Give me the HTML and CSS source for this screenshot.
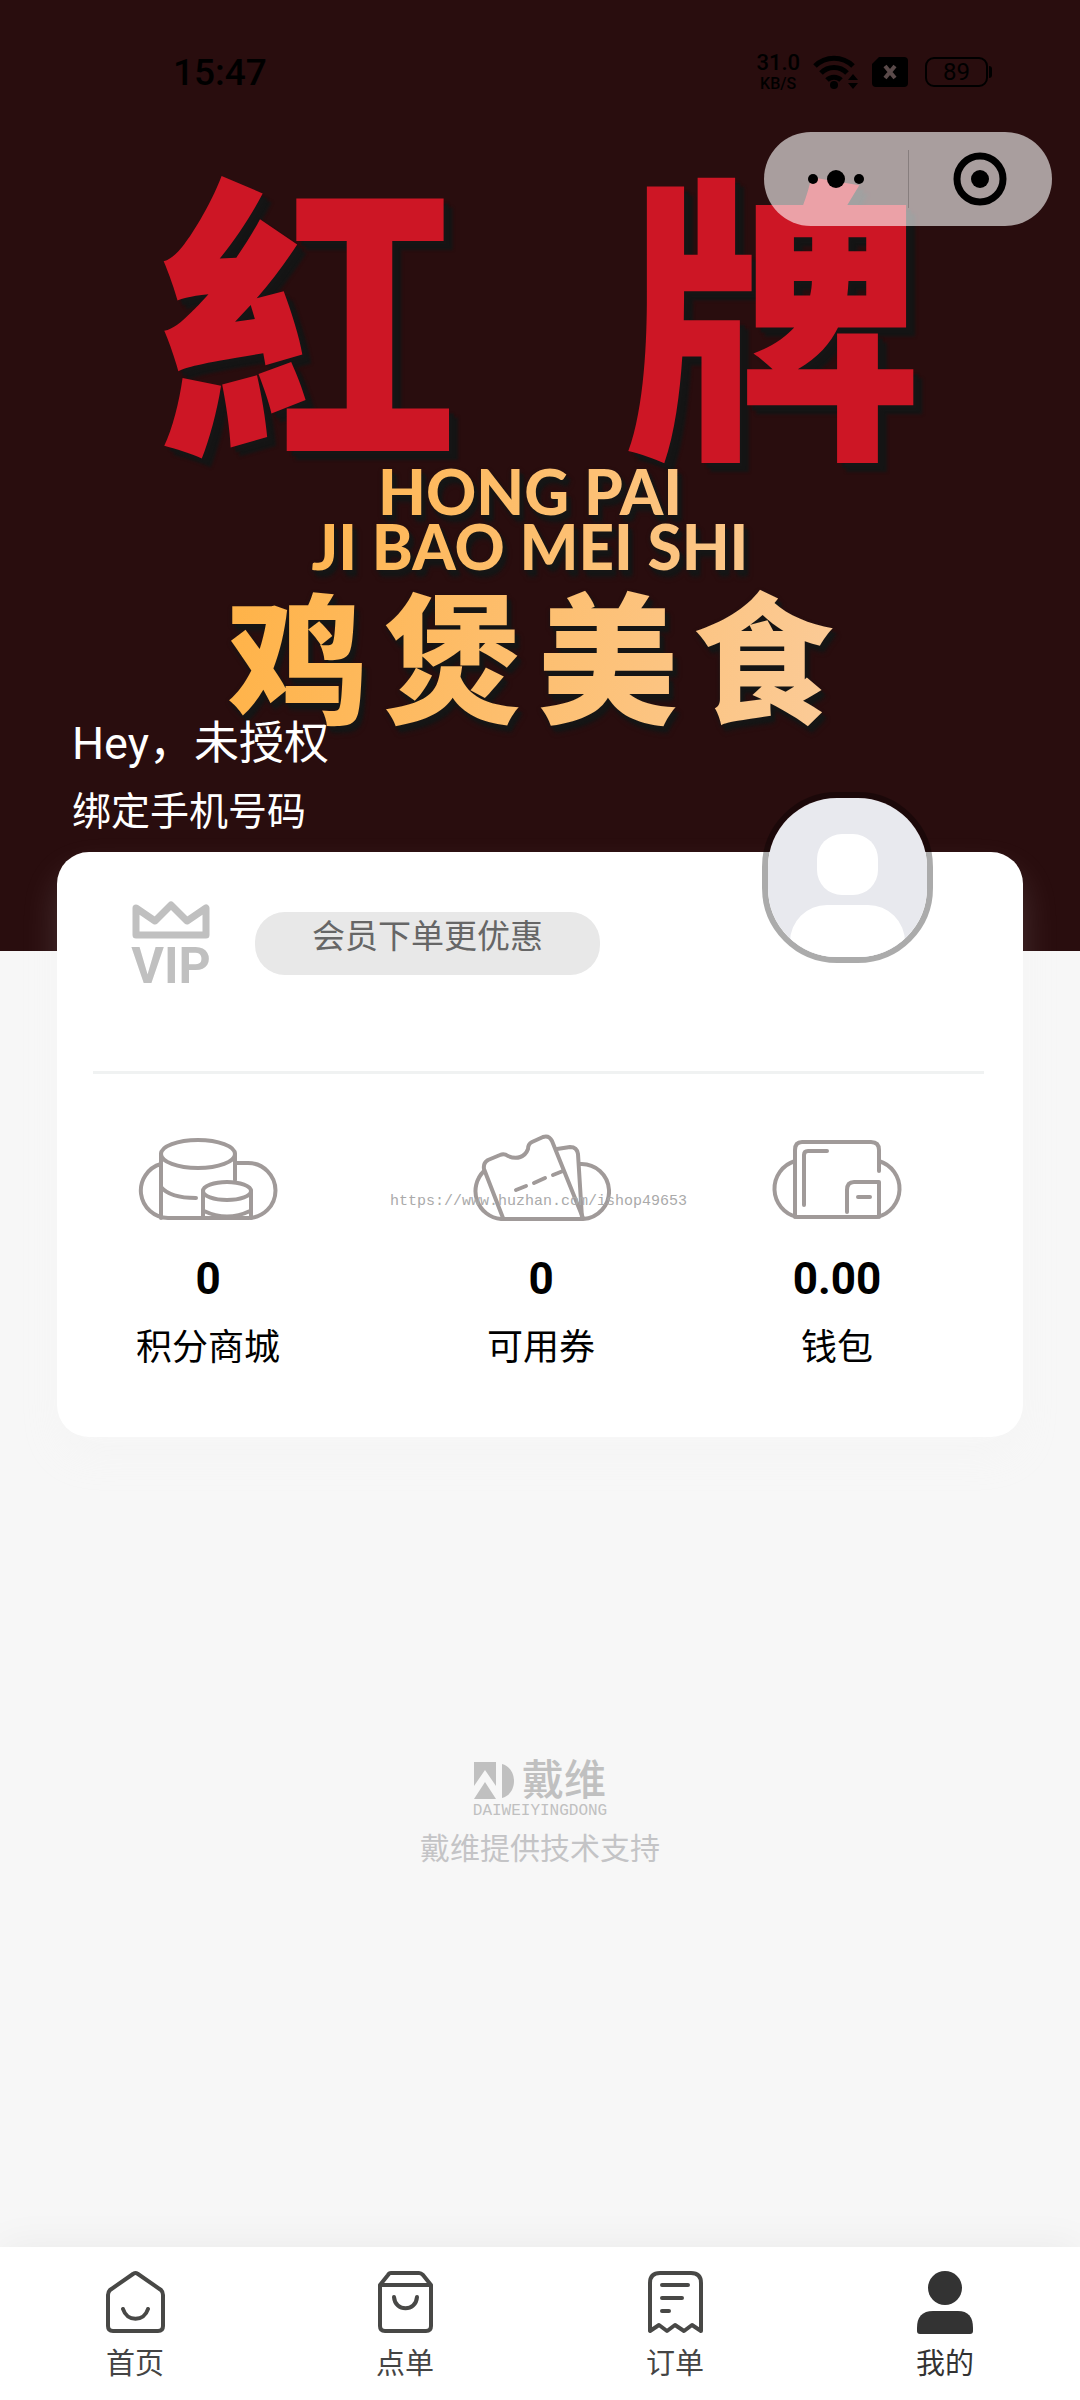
FILE: index.html
```html
<!DOCTYPE html>
<html lang="zh-CN">
<head>
<meta charset="utf-8">
<meta name="viewport" content="width=device-width, initial-scale=1">
<title>我的</title>
<link rel="stylesheet" href="styles.css">
</head>
<body>
<div class="page">
  <header class="hero">
    <div class="status">
      <time class="status-time">15:47</time>
      <div class="status-icons">
        <div class="net"><span>31.0</span><span class="net-unit">KB/S</span></div>
        <svg class="wifi" viewBox="0 0 46 34" aria-hidden="true">
          <g fill="none" stroke="#000" stroke-width="5">
            <path d="M2 11 A27 27 0 0 1 40 11"/>
            <path d="M8 18 A18 18 0 0 1 34 18"/>
            <path d="M14 25 A10 10 0 0 1 28 25"/>
          </g>
          <circle cx="21" cy="30" r="4"/>
          <path d="M40 19l5 6H35zM40 34l5-6H35z"/>
        </svg>
        <svg class="sim" viewBox="0 0 36 30" aria-hidden="true">
          <path d="M7 0H32a4 4 0 0 1 4 4V26a4 4 0 0 1-4 4H4a4 4 0 0 1-4-4V7z"/>
          <path d="M13 9l10 12M23 9L13 21" stroke="#5a4a4a" stroke-width="4"/>
        </svg>
        <div class="battery">89</div>
      </div>
    </div>
    <div class="capsule">
      <button class="capsule-btn" aria-label="更多">
        <svg class="dots" viewBox="0 0 58 20"><circle cx="6" cy="10" r="5"/><circle cx="29" cy="10" r="9"/><circle cx="52" cy="10" r="5"/></svg>
      </button>
      <button class="capsule-btn" aria-label="关闭">
        <svg class="ring" viewBox="0 0 54 54"><circle cx="27" cy="27" r="23" fill="none" stroke="#000" stroke-width="7"/><circle cx="27" cy="27" r="9"/></svg>
      </button>
    </div>
    <div class="logo">
      <div class="logo-red"><span>紅</span><span>牌</span></div>
      <div class="logo-gold">
        <div class="logo-latin">HONG PAI</div>
        <div class="logo-latin">JI BAO MEI SHI</div>
        <div class="logo-food"><span>鸡</span><span>煲</span><span>美</span><span>食</span></div>
      </div>
    </div>
    <div class="greeting">
      <h1 class="hello">Hey，未授权</h1>
      <a class="bind" href="#">绑定手机号码</a>
    </div>
  </header>

  <main class="main">
    <section class="card">
      <button class="avatar" aria-label="头像">
        <svg viewBox="0 0 159 159"><rect width="159" height="159" fill="#e8e9ee"/><rect x="49" y="36" width="61" height="61" rx="25" fill="#fff"/><rect x="22" y="107" width="115" height="90" rx="37" fill="#fff"/></svg>
      </button>
      <div class="vip">
        <svg class="vip-icon" viewBox="0 0 80 86" role="img" aria-label="VIP">
          <path d="M5 8L24 21L40 5L56 21L75 8V35H5Z" fill="none" stroke="#c0c0c0" stroke-width="7" stroke-linejoin="round"/>
          <text class="vip-text" x="40" y="83" text-anchor="middle">VIP</text>
        </svg>
        <button class="vip-pill">会员下单更优惠</button>
      </div>
      <hr class="rule">
      <nav class="stats">
        <a class="stat" href="#">
          <svg class="stat-icon" viewBox="0 0 140 96" aria-hidden="true">
            <path d="M23 34A27.5 27.5 0 0 0 30 88H110A27.5 27.5 0 0 0 110 33H97"/>
            <ellipse cx="60" cy="24" rx="37" ry="14"/>
            <path d="M23 24V88M97 24V50M23 57Q32 68 58 68"/>
            <ellipse cx="89" cy="61" rx="24" ry="9"/>
            <path d="M65 61V88M113 61V88M66 81Q89 92 112 81"/>
          </svg>
          <b class="stat-num">0</b><span class="stat-label">积分商城</span>
        </a>
        <a class="stat" href="#">
          <svg class="stat-icon" viewBox="0 0 140 96" aria-hidden="true">
            <path d="M13 41A28 28 0 0 0 30 89H112A27 27 0 0 0 109 34"/>
            <path d="M32 88L13 39Q12 33 17 30L29 25Q33 23 37 26C46 30 54 27 57 19Q57 14 61 12L72 7Q78 5 81 11L112 88"/>
            <path d="M86 19L99 17Q106 17 107 24L111 88"/>
            <path d="M45 60L55 56M63 53L74 48M82 45L92 41"/>
          </svg>
          <b class="stat-num">0</b><span class="stat-label">可用券</span>
        </a>
        <a class="stat" href="#">
          <svg class="stat-icon" viewBox="0 0 140 96" aria-hidden="true">
            <path d="M28 31A29 29 0 0 0 30 87H110A29 29 0 0 0 112 31"/>
            <path d="M28 87V20Q28 12 35 12H104Q112 12 112 20V41M60 21H41Q37 21 37 25V75"/>
            <path d="M80 82V60Q80 52 87 52H112V87M91 67H103"/>
          </svg>
          <b class="stat-num">0.00</b><span class="stat-label">钱包</span>
        </a>
      </nav>
      <div class="watermark">https://www.huzhan.com/ishop49653</div>
    </section>

    <footer class="brand">
      <div class="brand-logo">
        <svg class="brand-mark" viewBox="0 0 40 38" aria-hidden="true"><path d="M0 0H22V24L11 8L0 24ZM0 37L11 20L22 37ZM28 2C44 6 44 32 28 36Z" fill="#c0c0c0"/></svg>
        <span class="brand-name">戴维</span>
      </div>
      <div class="brand-latin">DAIWEIYINGDONG</div>
      <div class="brand-note">戴维提供技术支持</div>
    </footer>
  </main>

  <nav class="tabs">
    <a class="tab" href="#">
      <svg viewBox="0 0 64 64" aria-hidden="true"><path d="M30 4Q32 2 35 4L58 20Q60 22 60 25V56Q60 61 55 61H10Q5 61 5 56V25Q5 22 7 20ZM20 39C24 52 41 52 45 39"/></svg>
      <span>首页</span>
    </a>
    <a class="tab" href="#">
      <svg viewBox="0 0 64 64" aria-hidden="true"><path d="M7 15L15 5Q16 3 18 3H46Q48 3 50 5L58 15V56Q58 61 53 61H12Q7 61 7 56ZM7 15H58M21 27C22 42 43 42 44 27"/></svg>
      <span>点单</span>
    </a>
    <a class="tab" href="#">
      <svg viewBox="0 0 64 64" aria-hidden="true"><path d="M7 61V13Q7 3 17 3H48Q58 3 58 13V61L49 55L41 61L32 55L24 61L16 55ZM19 15H45M19 28H39M19 41H26"/></svg>
      <span>订单</span>
    </a>
    <a class="tab tab-active" href="#" aria-current="page">
      <svg viewBox="0 0 64 64" aria-hidden="true"><circle cx="32" cy="18" r="17"/><path d="M4 61V58Q4 41 20 41H45Q60 41 60 58V61Q60 64 57 64H7Q4 64 4 61Z"/></svg>
      <span>我的</span>
    </a>
  </nav>
</div>
</body>
</html>
```

FILE: styles.css
```css
* { box-sizing: border-box; }

body {
  margin: 0;
  background: #f7f7f7;
  color: #000;
  font-family: Roboto, "Noto Sans CJK SC", sans-serif;
}

a { color: inherit; text-decoration: none; }

button {
  margin: 0;
  padding: 0;
  border: 0;
  background: none;
  font: inherit;
  color: inherit;
}

svg { display: block; }

.page {
  display: flex;
  flex-direction: column;
  min-height: 100vh;
}

/* Header */
.hero {
  position: relative;
  padding-bottom: 113px;
  background: #290d0e;
}

.status {
  display: flex;
  align-items: center;
  justify-content: space-between;
  height: 144px;
  padding: 0 88px 0 173px;
}

.status-time { font-size: 37px; font-weight: 500; }

.status-icons { display: flex; align-items: center; gap: 13px; }

.net {
  display: flex;
  flex-direction: column;
  align-items: center;
  font-size: 22px;
  font-weight: 500;
  line-height: 24px;
}

.net-unit { font-size: 16px; line-height: 18px; }

.wifi { width: 46px; height: 34px; }
.sim { width: 36px; height: 30px; }

.battery {
  position: relative;
  width: 63px;
  height: 30px;
  margin: 0 4px;
  border: 2px solid #000;
  border-radius: 9px;
  font-size: 24px;
  line-height: 26px;
  text-align: center;
}

.battery::after {
  content: "";
  position: absolute;
  top: 7px;
  right: -6px;
  width: 3px;
  height: 12px;
  border-radius: 0 3px 3px 0;
  background: #000;
}

.capsule {
  position: absolute;
  z-index: 1;
  top: 132px;
  right: 28px;
  display: flex;
  width: 288px;
  height: 94px;
  border-radius: 47px;
  background: rgba(255, 255, 255, .6);
}

.capsule-btn {
  flex: 1;
  display: flex;
  align-items: center;
  justify-content: center;
}

.capsule-btn + .capsule-btn::before {
  content: "";
  position: absolute;
  top: 18px;
  left: 50%;
  width: 1px;
  height: 58px;
  background: rgba(0, 0, 0, .2);
}

.dots { width: 58px; height: 20px; }
.ring { width: 54px; height: 54px; }

.logo {
  display: flex;
  flex-direction: column;
  align-items: center;
  padding-top: 9px;
}

.logo-red {
  display: flex;
  gap: 167px;
  color: #cd1625;
  font-family: "Noto Sans CJK TC", sans-serif;
  font-size: 300px;
  font-weight: 900;
  line-height: 300px;
  text-shadow: 5px 5px 2px #151515, 9px 9px 3px #151515;
}

.logo-gold {
  display: flex;
  flex-direction: column;
  align-items: center;
  margin: 11px 20px 0 0;
  background: linear-gradient(100deg, #ffb245, #fbcb98);
  background-clip: text;
  -webkit-background-clip: text;
  color: transparent;
  filter: drop-shadow(4px 5px 1px #151515) drop-shadow(0 2px 2px #151515);
}

.logo-latin {
  font-family: Lato, sans-serif;
  font-size: 62px;
  font-weight: 900;
  line-height: 55px;
}

.logo-food {
  display: flex;
  gap: 15px;
  margin-top: 20px;
  font-size: 140px;
  font-weight: 900;
  line-height: 140px;
}

.greeting {
  position: relative;
  display: flex;
  flex-direction: column;
  align-items: flex-start;
  gap: 12px;
  margin-top: -20px;
  padding: 0 72px;
  color: #fff;
}

.hello { margin: 0; font-size: 45px; font-weight: 400; line-height: 60px; }
.bind { font-size: 39px; line-height: 52px; }

/* Member card */
.main { flex: 1; }

.card {
  position: relative;
  margin: -99px 57px 0;
  padding: 48px 0 65px;
  border-radius: 32px;
  background: #fff;
  box-shadow: 0 20px 36px rgba(240, 240, 240, .15);
}

.avatar {
  position: absolute;
  top: -60px;
  right: 90px;
  width: 171px;
  height: 171px;
  overflow: hidden;
  border: 6px solid rgba(0, 0, 0, .33);
  border-radius: 75px;
}

.vip {
  display: flex;
  align-items: center;
  gap: 44px;
  padding: 0 74px;
}

.vip-icon { width: 80px; height: 86px; }

.vip-text {
  fill: #c0c0c0;
  font-family: Roboto, sans-serif;
  font-size: 50px;
  font-weight: 700;
}

.vip-pill {
  width: 345px;
  height: 63px;
  padding-bottom: 12px;
  border-radius: 30px;
  background: #e8e8e8;
  color: #666;
  font-size: 33px;
  line-height: 50px;
}

.rule {
  height: 3px;
  margin: 85px 39px 0 36px;
  border: 0;
  background: #f0f2f2;
}

.stats {
  display: grid;
  grid-template-columns: 302fr 364fr 228fr;
  padding: 56px 72px 0 0;
}

.stat { display: flex; flex-direction: column; align-items: center; }

.stat-icon {
  width: 140px;
  height: 96px;
  fill: none;
  stroke: #a09a99;
  stroke-width: 4px;
  stroke-linecap: round;
  stroke-linejoin: round;
}

.stat-num {
  margin-top: 29px;
  font-size: 44px;
  line-height: 48px;
}

.stat-label { margin-top: 21px; font-size: 36px; line-height: 48px; }

.watermark {
  position: absolute;
  top: 340px;
  left: 333px;
  color: #aaa;
  font-family: "Liberation Mono", monospace;
  font-size: 15px;
  line-height: 20px;
}

/* Vendor credit */
.brand {
  display: flex;
  flex-direction: column;
  align-items: center;
  padding-top: 324px;
  color: #c0c0c0;
}

.brand-logo { display: flex; align-items: center; gap: 8px; height: 40px; }
.brand-mark { width: 40px; height: 38px; }
.brand-name { font-size: 42px; font-weight: 500; line-height: 40px; }

.brand-latin {
  font-family: "Liberation Mono", monospace;
  font-size: 16px;
  line-height: 20px;
}

.brand-note { margin-top: 6px; color: #c4c4c6; font-size: 30px; line-height: 44px; }

/* Tab bar */
.tabs {
  position: sticky;
  bottom: 0;
  display: flex;
  padding: 23px 0 14px;
  background: #fff;
  box-shadow: 0 0 40px rgba(0, 0, 0, .06);
}

.tab {
  flex: 1;
  display: flex;
  flex-direction: column;
  align-items: center;
  gap: 8px;
  color: #444;
  font-size: 29px;
  line-height: 44px;
}

.tab svg {
  width: 64px;
  height: 64px;
  fill: none;
  stroke: #484846;
  stroke-width: 4px;
  stroke-linecap: round;
  stroke-linejoin: round;
}

.tab-active { color: #333; }
.tab-active svg { fill: #333; stroke: none; }
```
